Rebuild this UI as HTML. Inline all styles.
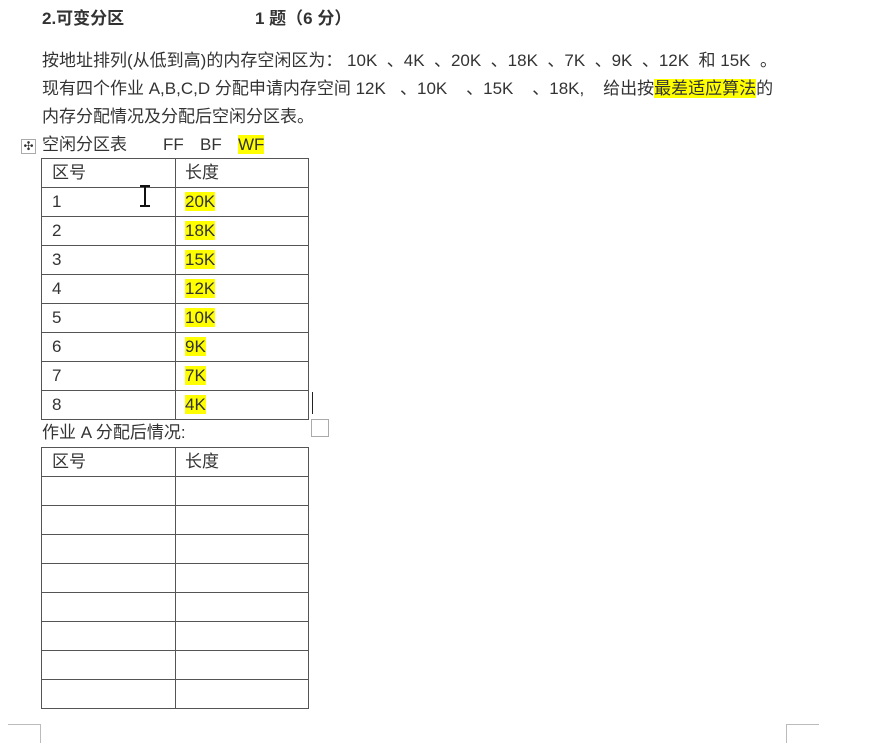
<!DOCTYPE html>
<html><head><meta charset="utf-8"><style>
body{margin:0;width:884px;height:742px;background:#fff;position:relative;overflow:hidden;font-family:"Liberation Sans","Noto Sans CJK SC",sans-serif;color:#333;}
.t{position:absolute;white-space:nowrap;font-size:17px;line-height:20px;}
.h{background:#ffff00;}
table{position:absolute;left:41px;border-collapse:collapse;font-size:17px;color:#333;}
td{border:1px solid #555;width:133px;height:29px;padding:0 0 0 10px;box-sizing:border-box;vertical-align:middle;line-height:20px;}
td:first-child{width:134px;}
td.c2{padding-left:9px;}
</style></head><body>
<div class="t" style="left:42px;top:9px;font-weight:bold;">2.可变分区</div>
<div class="t" style="left:255px;top:9px;font-weight:bold;">1 题（6 分）</div>
<div class="t" style="left:42px;top:51px;">按地址排列(从低到高)的内存空闲区为：&nbsp;10K &nbsp;、4K &nbsp;、20K &nbsp;、18K &nbsp;、7K &nbsp;、9K &nbsp;、12K &nbsp;和 15K &nbsp;。</div>
<div class="t" style="left:42px;top:79px;">现有四个作业 A,B,C,D 分配申请内存空间 12K &nbsp;&nbsp;、10K &nbsp;&nbsp;&nbsp;、15K &nbsp;&nbsp;&nbsp;、18K,&nbsp;&nbsp;&nbsp; 给出按<span class="h">最差适应算法</span>的</div>
<div class="t" style="left:42px;top:107px;">内存分配情况及分配后空闲分区表。</div>
<div style="position:absolute;left:21px;top:139px;width:15px;height:15px;border:1px solid #aaa;box-sizing:border-box;font-size:12px;line-height:13px;text-align:center;color:#333">✣</div>
<div class="t" style="left:42px;top:135px;">空闲分区表</div>
<div class="t" style="left:163px;top:135px;">FF</div>
<div class="t" style="left:200px;top:135px;">BF</div>
<div class="t" style="left:238px;top:135px;"><span class="h">WF</span></div>
<table style="top:158px;">
<tr><td>区号</td><td class="c2">长度</td></tr>
<tr><td>1</td><td class="c2"><span class="h">20K</span></td></tr>
<tr><td>2</td><td class="c2"><span class="h">18K</span></td></tr>
<tr><td>3</td><td class="c2"><span class="h">15K</span></td></tr>
<tr><td>4</td><td class="c2"><span class="h">12K</span></td></tr>
<tr><td>5</td><td class="c2"><span class="h">10K</span></td></tr>
<tr><td>6</td><td class="c2"><span class="h">9K</span></td></tr>
<tr><td>7</td><td class="c2"><span class="h">7K</span></td></tr>
<tr><td>8</td><td class="c2"><span class="h">4K</span></td></tr>
</table>
<div style="position:absolute;left:144px;top:186px;width:2px;height:20px;background:#111"></div>
<div style="position:absolute;left:140px;top:185px;width:10px;height:2px;background:#111"></div>
<div style="position:absolute;left:140px;top:205px;width:10px;height:2px;background:#111"></div>
<div style="position:absolute;left:312px;top:392px;width:1px;height:22px;background:#222"></div>
<div style="position:absolute;left:311px;top:419px;width:18px;height:18px;border:1px solid #aaa;box-sizing:border-box"></div>
<div class="t" style="left:42px;top:423px;">作业 A 分配后情况:</div>
<table style="top:447px;">
<tr><td>区号</td><td class="c2">长度</td></tr>
<tr><td></td><td></td></tr><tr><td></td><td></td></tr><tr><td></td><td></td></tr>
<tr><td></td><td></td></tr><tr><td></td><td></td></tr><tr><td></td><td></td></tr>
<tr><td></td><td></td></tr><tr><td></td><td></td></tr>
</table>
<div style="position:absolute;left:8px;top:724px;width:32px;height:18px;border-top:1px solid #bbb;border-right:1px solid #bbb"></div>
<div style="position:absolute;left:786px;top:724px;width:32px;height:18px;border-top:1px solid #bbb;border-left:1px solid #bbb"></div>
</body></html>
